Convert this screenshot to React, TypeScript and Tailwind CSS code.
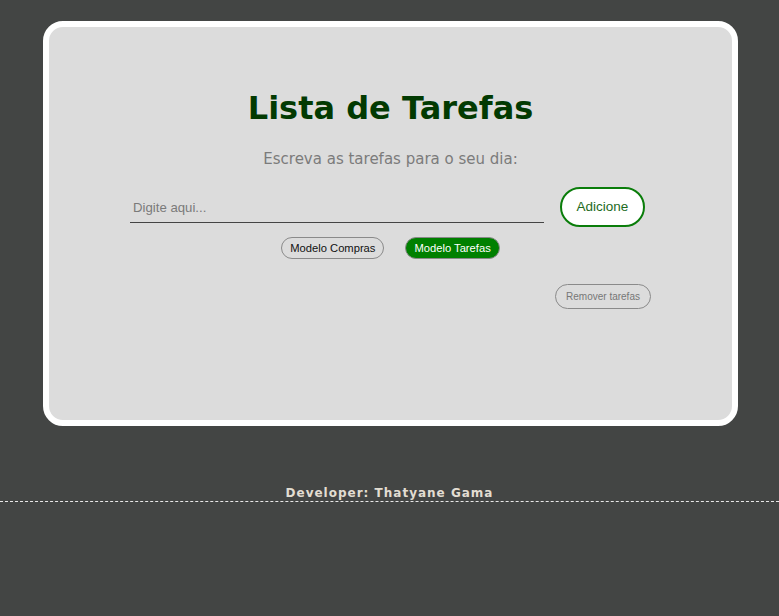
export default function App() {
  return (
    <div className="min-h-[616px] bg-[#434544] pt-[21px] font-['DejaVu_Sans',Verdana,sans-serif]">
      <div className="ml-[43px] w-[695px] h-[405px] rounded-[20px] border-[6px] border-white bg-[#dcdcdc] px-[81px] pt-[63px]">
        <h1 className="text-center text-[32px] leading-[37px] font-bold text-[#023a02]">Lista de Tarefas</h1>
        <p className="mt-[23px] text-center text-[15px] leading-[18px] text-[#7b7b7b]">
          Escreva as tarefas para o seu dia:
        </p>

        <div className="mt-[19px] flex items-center font-['Liberation_Sans',Arial,sans-serif]">
          <input
            type="text"
            placeholder="Digite aqui..."
            className="mt-[2px] h-[30px] w-[414px] border-b border-[#444] bg-transparent px-[3px] text-[13.2px] text-[#333] placeholder:text-[#7a7a7a] outline-none"
          />
          <button className="ml-4 h-10 w-[85px] rounded-full border-2 border-[#0a7d0a] bg-white text-[13.5px] text-[#1d6b1d]">
            Adicione
          </button>
        </div>

        <div className="mt-[10px] flex justify-center gap-[21px] font-['Liberation_Sans',Arial,sans-serif]">
          <button className="h-[22px] rounded-full border border-[#8a8a8a] px-[8px] text-[11.2px] text-[#111]">
            Modelo Compras
          </button>
          <button className="h-[22px] rounded-full border border-[#8a8a8a] bg-[#008000] px-[8px] text-[11.2px] text-white">
            Modelo Tarefas
          </button>
        </div>

        <div className="mt-[25px] flex justify-end font-['Liberation_Sans',Arial,sans-serif]">
          <button className="h-[25px] w-[96px] rounded-full border border-[#8a8a8a] text-[10px] text-[#777]">
            Remover tarefas
          </button>
        </div>
      </div>

      <footer className="mt-[60px] border-b border-dashed border-[#e8e8e8] text-center text-[12px] leading-[15px] font-bold tracking-[1px] text-[#e2ddd2]">
        Developer: Thatyane Gama
      </footer>
    </div>
  )
}
